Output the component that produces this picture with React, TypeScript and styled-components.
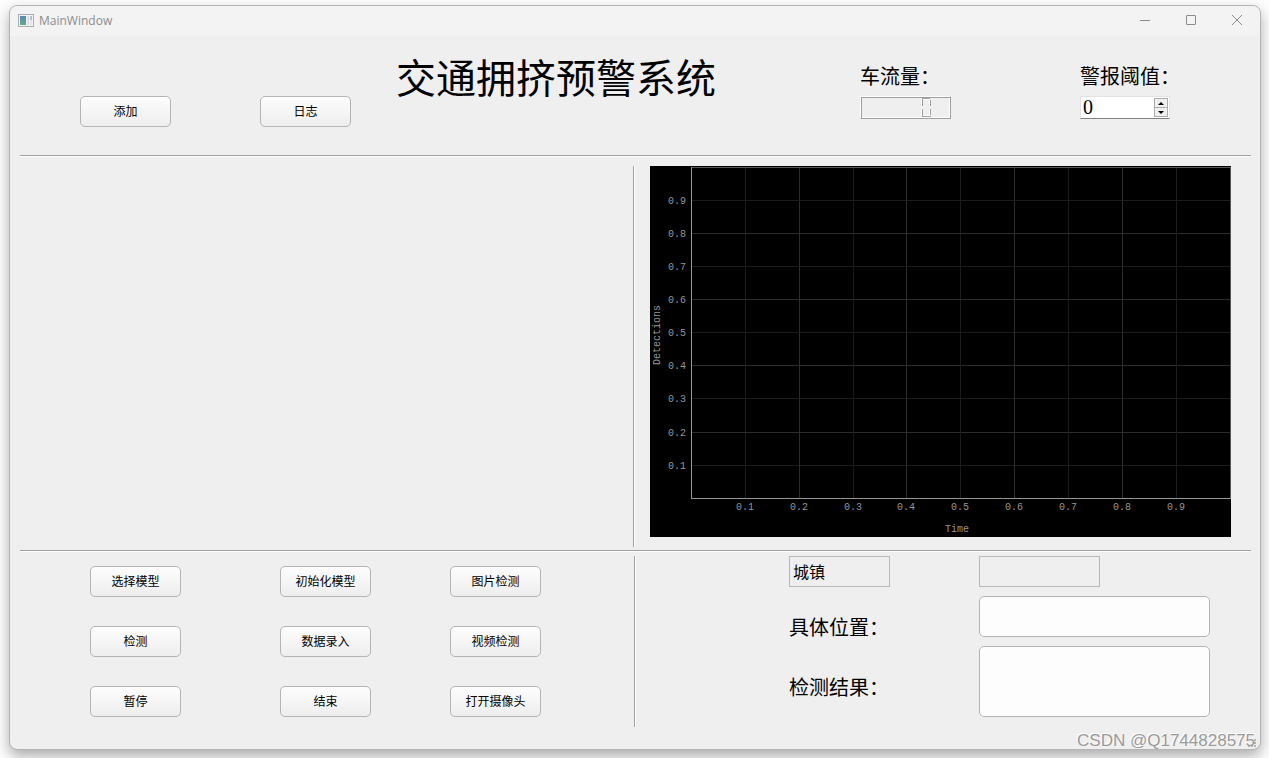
import React, { useState } from "react";
import styled, { createGlobalStyle } from "styled-components";

const sans = `"Noto Sans CJK SC", sans-serif`;
const kai = `KaiTi, STKaiti, "Noto Sans CJK SC", serif`;
const song = `"Liberation Serif", "Noto Sans CJK SC", serif`;

const GlobalStyle = createGlobalStyle`
  * { box-sizing: border-box; }
  html { background: #fdfdfd; }
  body { margin: 0; font-family: ${sans}; color: #000; }
  button, input, textarea { font: inherit; color: inherit; margin: 0; }
`;

const Desktop = styled.div`
  padding: 5px 8px 8px 9px;
  overflow: hidden;
`;

const Frame = styled.div`
  position: relative;
  border: 1px solid #b4b4b4;
  border-radius: 8px;
  background: #efefef;
  box-shadow: 0 6px 14px rgba(0, 0, 0, 0.32);
`;

const TitleBar = styled.header`
  display: flex;
  align-items: center;
  height: 30px;
  padding-left: 8px;
  border-radius: 8px 8px 0 0;
  background: #f3f3f3;
  color: #8c8c8c;
`;

const Caption = styled.span`
  flex: 1;
  padding-left: 5px;
  font-family: "Open Sans", sans-serif;
  font-size: 12px;
  line-height: 16px;
`;

const CaptionButton = styled.button`
  display: flex;
  align-items: center;
  justify-content: center;
  width: 46px;
  height: 28px;
  padding: 0;
  border: 0;
  background: transparent;
`;

const CaptionButtons = styled.div`
  display: flex;
  align-self: flex-start;
`;

const Content = styled.main`
  padding: 0 9px 0 10px;
`;

const Rule = styled.hr`
  height: 2px;
  margin: 0;
  border: 0;
  background: linear-gradient(#a0a0a0 50%, #fff 50%);
`;

const VerticalRule = styled.div`
  background: linear-gradient(90deg, #a0a0a0 50%, #fff 50%);
`;

const HeaderRow = styled.div`
  display: flex;
  align-items: flex-start;
  height: 119px;
  padding: 16px 71px 0 60px;
`;

const HeaderButtons = styled.div`
  display: flex;
  gap: 89px;
  padding-top: 44px;
`;

const PushButton = styled.button`
  width: 91px;
  height: 31px;
  padding: 0 0 2px;
  border: 1px solid #b4b4b4;
  border-radius: 5px;
  background: linear-gradient(#fdfdfd, #eeeeee);
  font-size: 12px;
  line-height: 16px;
  white-space: nowrap;
`;

const Heading = styled.h1`
  margin: 0 auto 0 45px;
  font-family: ${kai};
  font-size: 40px;
  line-height: 48px;
  font-weight: 400;
  white-space: nowrap;
`;

const Readings = styled.div`
  display: flex;
  gap: 120px;
  padding-top: 10px;
`;

const Reading = styled.div`
  display: flex;
  flex-direction: column;
  gap: 6px;
  width: 100px;
`;

const FieldLabel = styled.label<{ $family: string; $line: number }>`
  font-family: ${(p) => p.$family};
  font-size: 20px;
  line-height: ${(p) => p.$line}px;
  white-space: nowrap;
`;

const Lcd = styled.output`
  display: flex;
  justify-content: flex-end;
  width: 91px;
  height: 23px;
  padding-right: 18px;
  border: 1px solid;
  border-color: #fff #a0a0a0 #a0a0a0 #fff;
  box-shadow: inset 1px 1px #a0a0a0, inset -1px -1px #fff;
`;

const SpinBox = styled.div`
  display: flex;
  width: 90px;
  height: 23px;
  padding: 1px 1px 1px 0;
  border: 1px solid #e3e3e3;
  border-bottom-color: #808080;
  background: #fff;
`;

const SpinInput = styled.input`
  flex: 1;
  min-width: 0;
  padding: 0 2px;
  border: 0;
  outline: 0;
  background: transparent;
  font-family: ${song};
  font-size: 20px;
  line-height: 20px;
  appearance: textfield;
  &::-webkit-inner-spin-button { appearance: none; margin: 0; }
`;

const SpinButtons = styled.div`
  display: flex;
  flex-direction: column;
  width: 14px;
`;

const SpinButton = styled.button`
  display: flex;
  flex: 1;
  align-items: center;
  justify-content: center;
  min-height: 0;
  padding: 0;
  border: 1px solid #acacac;
  background: #f0f0f0;
  & + & { border-top: 0; }
`;

const Split = styled.section<{ $left: number; $right: number; $top: number; $bottom: number }>`
  display: grid;
  grid-template-columns: minmax(0, ${(p) => p.$left}fr) 2px minmax(0, ${(p) => p.$right}fr);
  padding-top: ${(p) => p.$top}px;
  padding-bottom: ${(p) => p.$bottom}px;
`;

const MonitorPane = styled.div`
  min-height: 381px;
`;

const PlotPane = styled.div`
  padding: 0 20px 10px 15px;
`;

const PlotSvg = styled.svg`
  display: block;
  width: 100%;
  height: auto;
  background: #000;
  font-family: "Liberation Mono", monospace;
  font-size: 10px;
  fill: #969696;
`;

const ActionGrid = styled.div`
  display: grid;
  grid-template-columns: 190px 170px auto;
  grid-auto-rows: 31px;
  row-gap: 29px;
  padding: 10px 0 10px 70px;
`;

const ResultPane = styled.div`
  display: flex;
  justify-content: flex-end;
  padding-right: 41px;
`;

const LabelColumn = styled.div`
  display: flex;
  flex-direction: column;
  width: 190px;
`;

const FieldColumn = styled.div`
  display: flex;
  flex-direction: column;
  gap: 9px;
  width: 231px;
`;

const ReadOnlyBox = styled.input<{ $width: number }>`
  width: ${(p) => p.$width}px;
  height: 31px;
  padding: 0 3px 2px;
  border: 1px solid #b9b9b9;
  border-radius: 0;
  outline: 0;
  background: transparent;
  font-size: 16px;
`;

const TextBox = styled.textarea<{ $height: number }>`
  display: block;
  width: 100%;
  height: ${(p) => p.$height}px;
  padding: 4px;
  border: 1px solid #b4b4b4;
  border-radius: 5px;
  outline: 0;
  resize: none;
  background: #fdfdfd;
  font-size: 12px;
`;

const LabelSpacer = styled.div`
  height: 10px;
`;

const StatusBar = styled.footer`
  display: flex;
  align-items: flex-end;
  justify-content: flex-end;
  height: 22px;
  padding: 0 3px 1px;
`;

const Watermark = styled.span`
  position: absolute;
  right: 5px;
  bottom: -1px;
  font-family: "Liberation Sans", sans-serif;
  font-size: 17px;
  line-height: 18px;
  color: #9a9a9a;
  text-shadow: -1px -1px #fff;
`;

const TICKS = [1, 2, 3, 4, 5, 6, 7, 8, 9];
const tickX = [95, 149, 203, 256, 310, 364, 418, 472, 526];
const tickY = [299, 266, 232, 199, 166, 133, 100, 67, 34];

function Plot() {
  return (
    <PlotSvg viewBox="0 0 581 371" role="img" aria-label="Detections / Time">
      <g shapeRendering="crispEdges">
        {TICKS.map((t, i) => (
          <g key={t} fill={t % 2 ? "#1c1c1c" : "#2c2c2c"}>
            <rect x={tickX[i]} y="1" width="1" height="331" />
            <rect x="42" y={tickY[i]} width="539" height="1" />
          </g>
        ))}
        <rect x="41" y="1" width="540" height="1" fill="#555" />
        <rect x="580" y="1" width="1" height="331" fill="#555" />
        <rect x="41" y="1" width="1" height="332" fill="#969696" />
        <rect x="41" y="332" width="540" height="1" fill="#969696" />
      </g>
      {TICKS.map((t, i) => (
        <g key={t}>
          <text x={tickX[i]} y="344" textAnchor="middle">{`0.${t}`}</text>
          <text x="36" y={tickY[i] + 4} textAnchor="end">{`0.${t}`}</text>
        </g>
      ))}
      <text x="307" y="366" textAnchor="middle">Time</text>
      <text transform="translate(10 169) rotate(-90)" textAnchor="middle">Detections</text>
    </PlotSvg>
  );
}

const ACTIONS = [
  "选择模型", "初始化模型", "图片检测",
  "检测", "数据录入", "视频检测",
  "暂停", "结束", "打开摄像头",
];

export default function App() {
  const [threshold, setThreshold] = useState(0);
  return (
    <Desktop>
      <GlobalStyle />
      <Frame>
        <TitleBar>
          <svg width="16" height="14" viewBox="0 0 16 14" aria-hidden="true">
            <defs>
              <linearGradient id="pane" x1="0" y1="0" x2="0" y2="1">
                <stop offset="0" stopColor="#5b86b8" />
                <stop offset="1" stopColor="#5fae84" />
              </linearGradient>
            </defs>
            <rect x="0.5" y="0.5" width="15" height="12" fill="#f4f4f4" stroke="#a9adb5" />
            <rect x="2" y="2" width="6" height="9" fill="url(#pane)" />
            <rect x="9" y="2" width="2" height="9" fill="#dedede" />
            <rect x="12" y="2" width="2" height="4" fill="#a9c6d0" />
            <rect x="12" y="6" width="2" height="5" fill="#e6e6e6" />
          </svg>
          <Caption>MainWindow</Caption>
          <CaptionButtons>
            <CaptionButton aria-label="Minimize">
              <svg width="10" height="10"><path d="M0 5.5h10" stroke="#8c8c8c" /></svg>
            </CaptionButton>
            <CaptionButton aria-label="Maximize">
              <svg width="10" height="10"><rect x="0.5" y="0.5" width="9" height="9" rx="0.5" fill="none" stroke="#8c8c8c" /></svg>
            </CaptionButton>
            <CaptionButton aria-label="Close">
              <svg width="10" height="10"><path d="M0 0l10 10M10 0L0 10" stroke="#8c8c8c" /></svg>
            </CaptionButton>
          </CaptionButtons>
        </TitleBar>

        <Content>
          <HeaderRow>
            <HeaderButtons>
              <PushButton>添加</PushButton>
              <PushButton>日志</PushButton>
            </HeaderButtons>
            <Heading>交通拥挤预警系统</Heading>
            <Readings>
              <Reading>
                <FieldLabel htmlFor="flow" $family={sans} $line={28}>车流量：</FieldLabel>
                <Lcd id="flow" aria-label="0">
                  <svg width="12" height="21" viewBox="0 0 12 21" aria-hidden="true" shapeRendering="crispEdges">
                    <path d="M2 1.5h8M2.5 2v7M2.5 12v7M10.5 3v6M10.5 12v6M2 19.5h9" fill="none" stroke="#a0a0a0" />
                    <path d="M3 2.5h7M1.5 1v8M1.5 11v8M9.5 3v6M9.5 12v6M3 18.5h6" fill="none" stroke="#fff" />
                  </svg>
                </Lcd>
              </Reading>
              <Reading>
                <FieldLabel htmlFor="threshold" $family={sans} $line={28}>警报阈值：</FieldLabel>
                <SpinBox>
                  <SpinInput
                    id="threshold"
                    type="number"
                    value={threshold}
                    onChange={(e) => setThreshold(Number(e.target.value))}
                  />
                  <SpinButtons>
                    <SpinButton aria-label="+" onClick={() => setThreshold(threshold + 1)}>
                      <svg width="6" height="3" viewBox="0 0 6 3"><path d="M0 3L3 0l3 3z" /></svg>
                    </SpinButton>
                    <SpinButton aria-label="-" onClick={() => setThreshold(Math.max(0, threshold - 1))}>
                      <svg width="6" height="3" viewBox="0 0 6 3"><path d="M0 0h6L3 3z" /></svg>
                    </SpinButton>
                  </SpinButtons>
                </SpinBox>
              </Reading>
            </Readings>
          </HeaderRow>

          <Rule />
          <Split $left={613} $right={616} $top={9} $bottom={3}>
            <MonitorPane />
            <VerticalRule />
            <PlotPane><Plot /></PlotPane>
          </Split>

          <Rule />
          <Split $left={614} $right={615} $top={4} $bottom={0}>
            <ActionGrid>
              {ACTIONS.map((name) => <PushButton key={name}>{name}</PushButton>)}
            </ActionGrid>
            <VerticalRule />
            <ResultPane>
              <LabelColumn>
                <ReadOnlyBox $width={101} readOnly defaultValue="城镇" aria-label="城镇" />
                <LabelSpacer />
                <FieldLabel htmlFor="place" $family={kai} $line={60}>具体位置：</FieldLabel>
                <FieldLabel htmlFor="result" $family={kai} $line={60}>检测结果：</FieldLabel>
              </LabelColumn>
              <FieldColumn>
                <ReadOnlyBox $width={121} readOnly aria-label="区域" />
                <TextBox id="place" $height={41} />
                <TextBox id="result" $height={71} />
              </FieldColumn>
            </ResultPane>
          </Split>
        </Content>

        <StatusBar>
          <svg width="9" height="9" viewBox="0 0 9 9" aria-hidden="true" fill="#b4b4b4">
            <path d="M6 0h2v2h-2zM6 3h2v2h-2zM3 3h2v2h-2zM6 6h2v2h-2zM3 6h2v2h-2zM0 6h2v2h-2z" />
          </svg>
        </StatusBar>
        <Watermark>CSDN @Q1744828575</Watermark>
      </Frame>
    </Desktop>
  );
}
